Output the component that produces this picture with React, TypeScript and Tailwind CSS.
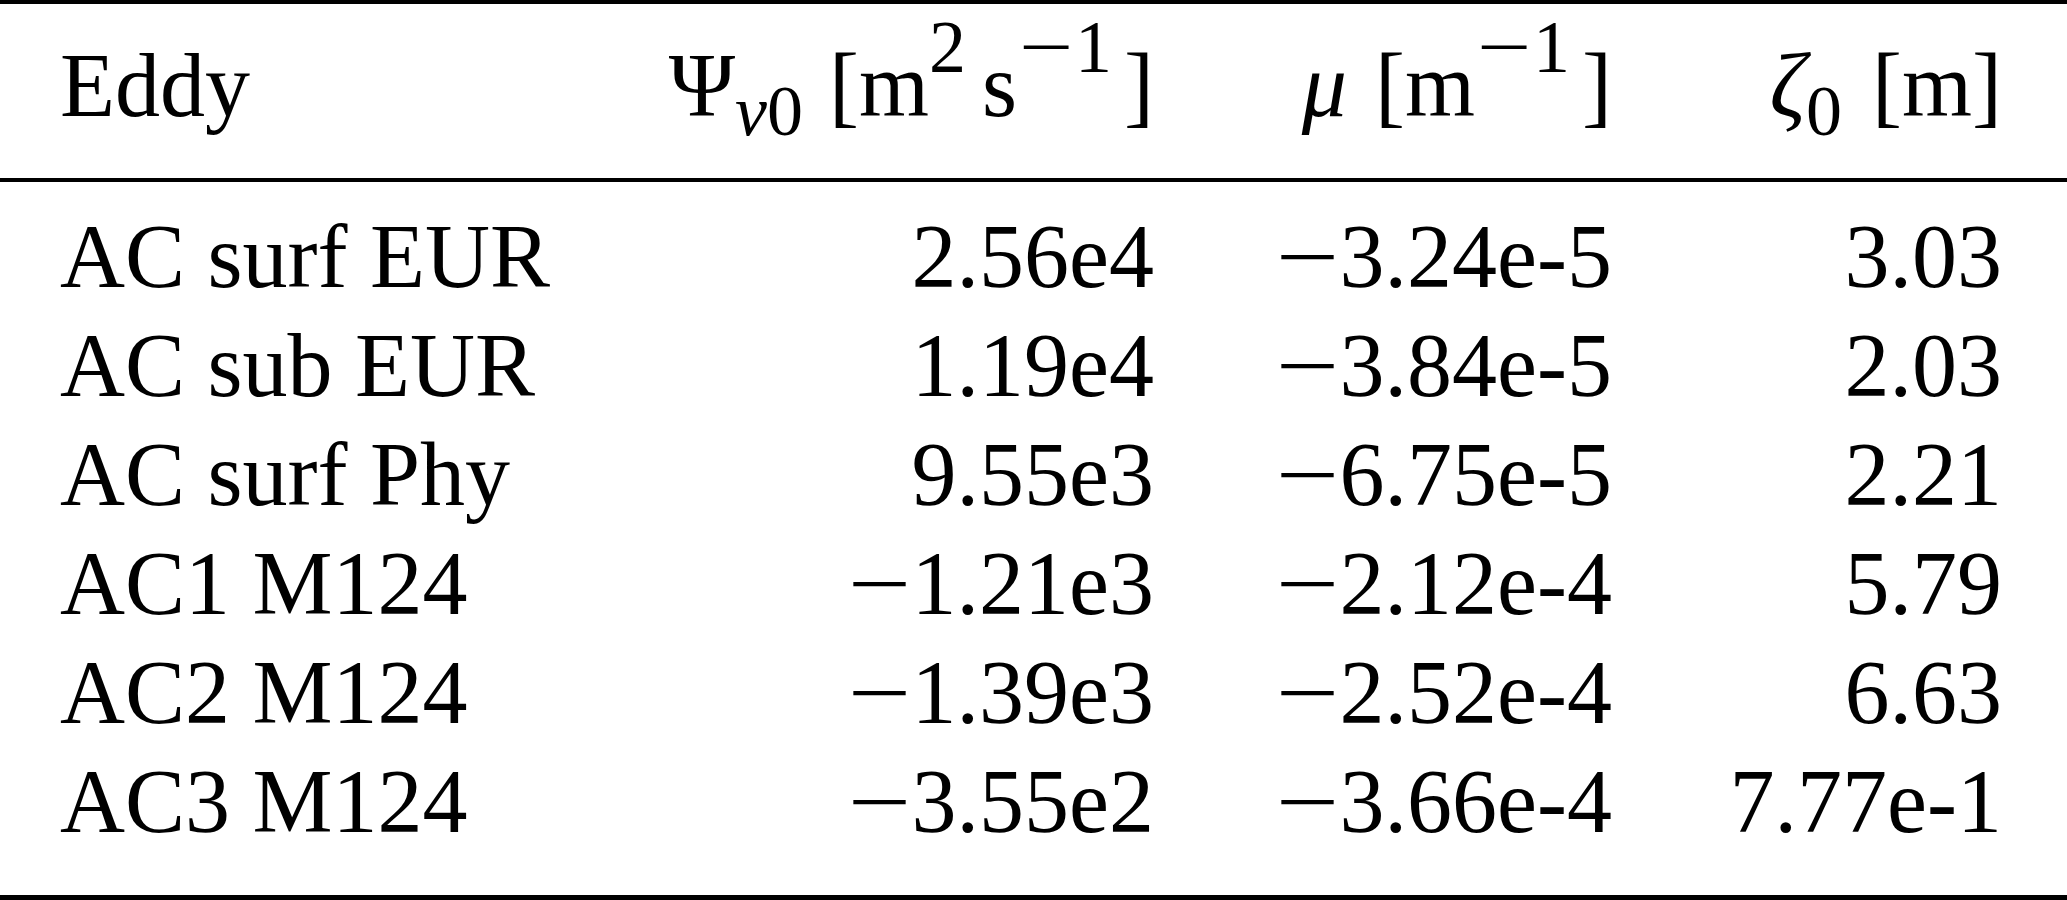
const rows = [
  ["AC surf EUR", "2.56e4", "−3.24e-5", "3.03"],
  ["AC sub EUR", "1.19e4", "−3.84e-5", "2.03"],
  ["AC surf Phy", "9.55e3", "−6.75e-5", "2.21"],
  ["AC1 M124", "−1.21e3", "−2.12e-4", "5.79"],
  ["AC2 M124", "−1.39e3", "−2.52e-4", "6.63"],
  ["AC3 M124", "−3.55e2", "−3.66e-4", "7.77e-1"],
];

// math minus is wider than the font's own glyph
const Num = ({ value }: { value: string }) => {
  if (!value.startsWith("−")) return <>{value}</>;
  return (
    <>
      <span className="inline-block w-[64px] text-left">
        <span className="inline-block origin-left scale-x-[1.25]">−</span>
      </span>
      {value.slice(1)}
    </>
  );
};

const Sup = ({ children }: { children: React.ReactNode }) => (
  <span className="align-[44px] text-[74px] leading-[0]">{children}</span>
);

const Sub = ({ children }: { children: React.ReactNode }) => (
  <span className="align-[-19px] text-[72px] leading-[0]">{children}</span>
);

const SupMinusOne = () => (
  <Sup>
    <span className="ml-[2px] inline-block w-[56px] text-left">
      <span className="inline-block origin-left scale-x-[1.3]">−</span>
    </span>
    1
  </Sup>
);

export default function App() {
  return (
    <div className="h-[900px] w-[2067px] bg-white font-['Liberation_Serif',serif] text-[90px] leading-[109px] text-black">
      {/* Header */}
      <div className="grid grid-cols-[600px_494px_458px_390px] border-t-[4px] border-b-[4px] border-black pb-[38px] pl-[60px] pt-[27px]">
        <div>Eddy</div>
        <div className="text-right whitespace-nowrap">
          Ψ
          <Sub>
            <i>v</i>0
          </Sub>
          <span className="ml-[26px]">
            [m<Sup>2</Sup>
            <span className="ml-[16px]">s</span>
            <SupMinusOne />
            <span className="ml-[12px]">]</span>
          </span>
        </div>
        <div className="text-right whitespace-nowrap">
          <i>μ</i>
          <span className="ml-[28px]">
            [m
            <SupMinusOne />
            <span className="ml-[12px]">]</span>
          </span>
        </div>
        <div className="text-right whitespace-nowrap">
          <i>ζ</i>
          <Sub>0</Sub>
          <span className="ml-[30px]">[m]</span>
        </div>
      </div>

      {/* Body */}
      <div className="grid grid-cols-[600px_494px_458px_390px] border-b-[5px] border-black pb-[39px] pl-[60px] pt-[20px]">
        {rows.map((r) => (
          <div key={r[0]} className="contents">
            <div className="whitespace-nowrap">{r[0]}</div>
            <div className="text-right whitespace-nowrap">
              <Num value={r[1]} />
            </div>
            <div className="text-right whitespace-nowrap">
              <Num value={r[2]} />
            </div>
            <div className="text-right whitespace-nowrap">
              <Num value={r[3]} />
            </div>
          </div>
        ))}
      </div>
    </div>
  );
}
